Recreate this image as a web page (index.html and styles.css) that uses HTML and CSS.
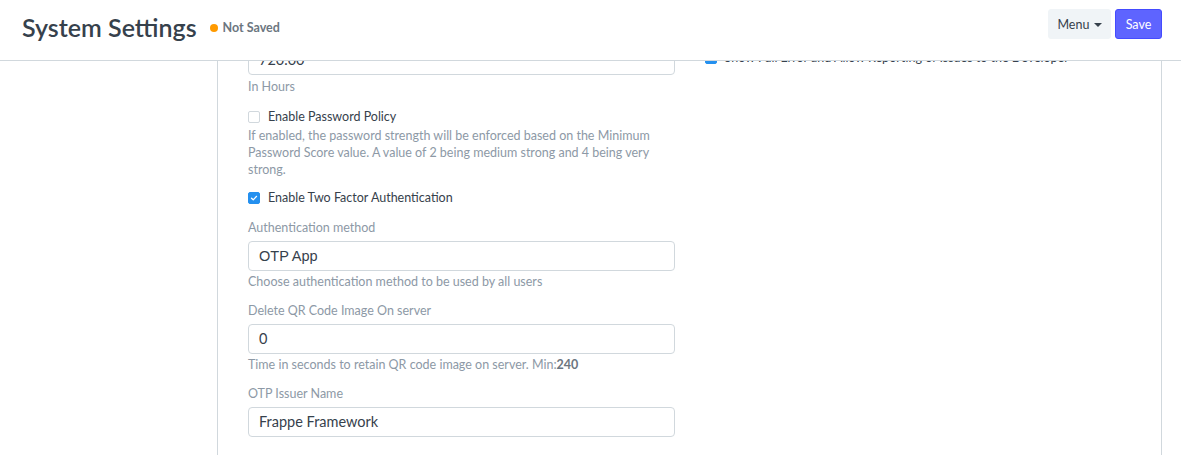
FILE: index.html
```html
<!DOCTYPE html>
<html>
<head>
<meta charset="utf-8">
<link rel="stylesheet" href="styles.css">
</head>
<body>
<header class="page-head">
  <div class="title-area">
    <h1 class="title">System Settings</h1>
    <span class="indicator"><span class="dot"></span>Not Saved</span>
  </div>
  <div class="actions">
    <button class="btn btn-default">Menu <span class="caret"></span></button>
    <button class="btn btn-primary">Save</button>
  </div>
</header>
<div class="page-body">
  <div class="sidebar"></div>
  <div class="layout-main">
    <div class="section">
      <div class="col col-left">
        <div class="control control-lead">
          <div class="input">720.00</div>
          <div class="desc">In Hours</div>
        </div>
        <div class="control check-control with-desc">
          <label class="check"><span class="box"></span>Enable Password Policy</label>
          <div class="desc">If enabled, the password strength will be enforced based on the Minimum Password Score value. A value of 2 being medium strong and 4 being very strong.</div>
        </div>
        <div class="control check-control">
          <label class="check"><span class="box checked"><svg viewBox="0 0 12 12" width="12" height="12"><path d="M3 6.2 L5.1 8.2 L9 4" fill="none" stroke="#fff" stroke-width="1.6" stroke-linecap="round" stroke-linejoin="round"/></svg></span>Enable Two Factor Authentication</label>
        </div>
        <div class="control">
          <div class="label">Authentication method</div>
          <div class="input select">OTP App</div>
          <div class="desc">Choose authentication method to be used by all users</div>
        </div>
        <div class="control">
          <div class="label">Delete QR Code Image On server</div>
          <div class="input">0</div>
          <div class="desc">Time in seconds to retain QR code image on server. Min:<b>240</b></div>
        </div>
        <div class="control">
          <div class="label">OTP Issuer Name</div>
          <div class="input">Frappe Framework</div>
        </div>
      </div>
      <div class="col col-right">
        <label class="check"><span class="box checked"><svg viewBox="0 0 12 12" width="12" height="12"><path d="M3 6.2 L5.1 8.2 L9 4" fill="none" stroke="#fff" stroke-width="1.6" stroke-linecap="round" stroke-linejoin="round"/></svg></span>Show Full Error and Allow Reporting of Issues to the Developer</label>
      </div>
    </div>
  </div>
</div>
</body>
</html>
```
FILE: styles.css
```css
html, body {
  margin: 0;
  padding: 0;
  background: #fff;
  font-family: Lato, "Noto Sans", sans-serif;
  color: #36414c;
  height: 100%;
  overflow: hidden;
}
.page-head {
  height: 61px;
  box-sizing: border-box;
  border-bottom: 1px solid #d1d8dd;
  display: flex;
  align-items: flex-start;
  justify-content: space-between;
  padding: 9px 19px 0 22px;
  background: #fff;
}
.title-area {
  display: flex;
  align-items: center;
  gap: 13px;
  height: 36px;
}
.title {
  margin: 0;
  font-size: 25px;
  line-height: 36px;
  font-weight: 600;
  color: #36414c;
}
.indicator {
  display: flex;
  align-items: center;
  font-size: 12.5px;
  font-weight: 700;
  color: #6c7680;
  margin-top: 1px;
}
.dot {
  width: 8px;
  height: 8px;
  border-radius: 50%;
  background: #ff9a00;
  margin-right: 5px;
}
.actions {
  display: flex;
  gap: 4px;
}
.btn {
  font-family: inherit;
  height: 30px;
  border: 1px solid transparent;
  border-radius: 3px;
  font-size: 12.5px;
  white-space: nowrap;
  cursor: pointer;
  padding: 0;
}
.btn-default {
  background: #f0f4f7;
  border-color: #f0f4f7;
  color: #36414c;
  width: 63px;
}
.btn-primary {
  background: #5e64ff;
  border-color: #444bff;
  color: #fff;
  width: 47px;
}
.caret {
  display: inline-block;
  width: 0;
  height: 0;
  border-left: 4px solid transparent;
  border-right: 4px solid transparent;
  border-top: 4px solid #36414c;
  vertical-align: middle;
  margin-left: 1px;
}
.page-body {
  display: grid;
  grid-template-columns: 196px 1fr;
  padding: 0 19px 0 21px;
  height: 394px;
  overflow: hidden;
}
.layout-main {
  border-left: 1px solid #d1d8dd;
  border-right: 1px solid #d1d8dd;
  overflow: hidden;
}
.section {
  display: grid;
  grid-template-columns: 1fr 1fr;
  gap: 30px;
  padding: 0 30px;
  margin-top: -16px;
}
.col-right {
  padding-top: 4px;
}
.control {
  margin-bottom: 12px;
}
.control-lead {
  margin-bottom: 13px;
}
.check-control {
  margin-bottom: 13px;
}
.check-control.with-desc {
  margin-bottom: 11px;
}
.label {
  font-size: 12.5px;
  color: #8d99a6;
  line-height: 17px;
  margin-bottom: 5px;
}
.input {
  height: 30px;
  box-sizing: border-box;
  border: 1px solid #d1d8dd;
  border-radius: 4px;
  background: #fff;
  font-size: 14.5px;
  line-height: 28px;
  padding: 0 10px;
  color: #36414c;
}
.select {
  font-family: "Liberation Sans", Arial, sans-serif;
  font-size: 14.5px;
}
.desc {
  font-size: 12.5px;
  color: #8d99a6;
  line-height: 17px;
  margin-top: 2px;
}
.control-lead .desc {
  margin-top: 3px;
}
.desc b {
  color: #6c7680;
}
.check {
  display: flex;
  align-items: center;
  font-size: 12.5px;
  line-height: 17px;
  color: #36414c;
}
.box {
  width: 12px;
  height: 12px;
  box-sizing: border-box;
  border: 1px solid #d1d8dd;
  border-radius: 2px;
  margin-right: 8px;
  display: flex;
  align-items: center;
  justify-content: center;
  background: #fff;
}
.box.checked {
  background: #2490ef;
  border-color: #2490ef;
}
.box svg {
  display: block;
}
```
